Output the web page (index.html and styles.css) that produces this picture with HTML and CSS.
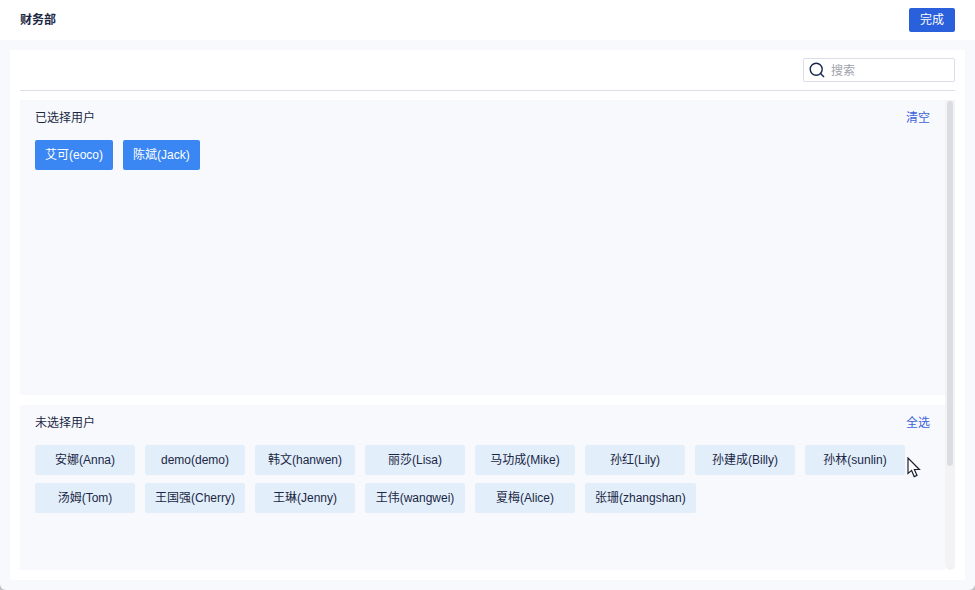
FILE: index.html
```html
<!DOCTYPE html>
<html lang="zh">
<head>
<meta charset="utf-8">
<title>财务部</title>
<link rel="stylesheet" href="styles.css">
</head>
<body>
<div class="app">
  <header class="topbar">
    <span class="title">财务部</span>
    <button class="done">完成</button>
  </header>
  <main class="card">
    <div class="toolbar">
      <label class="search">
        <svg class="search-icon" width="16" height="16" viewBox="0 0 16 16" fill="none"><circle cx="7.2" cy="7.2" r="6" stroke="#16294d" stroke-width="1.4"/><path d="M11.6 11.6L15 15" stroke="#16294d" stroke-width="1.4"/></svg>
        <span class="placeholder">搜索</span>
      </label>
    </div>
    <div class="scroller">
      <div class="sections">
        <section class="panel panel-selected">
          <div class="panel-head"><span>已选择用户</span><a class="link">清空</a></div>
          <div class="tags">
            <span class="tag tag-on">艾可(eoco)</span>
            <span class="tag tag-on">陈斌(Jack)</span>
          </div>
        </section>
        <section class="panel panel-rest">
          <div class="panel-head"><span>未选择用户</span><a class="link">全选</a></div>
          <div class="tags tags-rest">
            <span class="tag">安娜(Anna)</span>
            <span class="tag">demo(demo)</span>
            <span class="tag">韩文(hanwen)</span>
            <span class="tag">丽莎(Lisa)</span>
            <span class="tag">马功成(Mike)</span>
            <span class="tag">孙红(Lily)</span>
            <span class="tag">孙建成(Billy)</span>
            <span class="tag">孙林(sunlin)</span>
            <span class="tag">汤姆(Tom)</span>
            <span class="tag">王国强(Cherry)</span>
            <span class="tag">王琳(Jenny)</span>
            <span class="tag">王伟(wangwei)</span>
            <span class="tag">夏梅(Alice)</span>
            <span class="tag">张珊(zhangshan)</span>
          </div>
        </section>
      </div>
      <div class="scrollbar"><div class="thumb"></div></div>
    </div>
  </main>
  <svg class="cursor" width="14" height="21" viewBox="0 0 14 21"><path d="M1 1V16.5L4.6 13.4L7.2 19.6L10 18.4L7.4 12.5H12.4Z" fill="#fff" stroke="#1a2130" stroke-width="1.2"/></svg>
</div>
</body>
</html>
```
FILE: styles.css
```css
* { box-sizing: border-box; }
html, body { margin: 0; height: 100%; background: #bfc1c4; overflow: hidden; }
body { font: 12px/1 "Liberation Sans", "Noto Sans CJK SC", sans-serif; color: #1a2744; }
.app { position: relative; width: 975px; height: 590px; background: #f8f9fd; border-radius: 0 0 6px 6px; display: flex; flex-direction: column; overflow: hidden; }
.topbar { height: 40px; flex: none; background: #fff; display: flex; align-items: center; justify-content: space-between; padding: 0 20px; }
.title { font-weight: 700; color: #1a2744; }
.done { width: 46px; height: 24px; border: 0; border-radius: 2px; background: #2b60dc; color: #fff; font: inherit; padding: 0; }
.card { margin: 10px; height: 530px; background: #fff; padding: 0 10px 10px; display: flex; flex-direction: column; }
.toolbar { height: 41px; flex: none; border-bottom: 1px solid #dcdde6; display: flex; justify-content: flex-end; align-items: flex-start; padding-top: 8px; }
.search { width: 152px; height: 24px; border: 1px solid #dcdde6; border-radius: 2px; display: flex; align-items: center; padding-left: 5px; gap: 6px; }
.search-icon { flex: none; }
.placeholder { color: #a0a3ab; padding-top: 1px; }
.scroller { flex: 1; min-height: 0; margin-top: 9px; display: flex; }
.sections { width: 925px; display: flex; flex-direction: column; gap: 10px; }
.panel { background: #f8f9fd; padding: 0 15px; }
.panel-selected { height: 295px; }
.panel-rest { height: 165px; }
.panel-head { height: 40px; padding-top: 12px; display: flex; justify-content: space-between; line-height: 12px; color: #1a2744; }
.link { color: #3b62dc; }
.tags { display: flex; flex-wrap: wrap; gap: 8px 10px; }
.tag { min-width: 100px; height: 30px; padding: 0 10px; background: #e3eefb; border-radius: 2px; display: flex; align-items: center; justify-content: center; color: #1a2744; }
.tag-on { min-width: 0; background: #3a86f3; color: #fff; }
.scrollbar { width: 10px; background: #f3f3f5; border-radius: 0 0 5px 5px; padding: 1px 2px; }
.thumb { height: 365px; background: #dcdde2; border-radius: 3px; }
.cursor { position: absolute; left: 907px; top: 457px; }
```
